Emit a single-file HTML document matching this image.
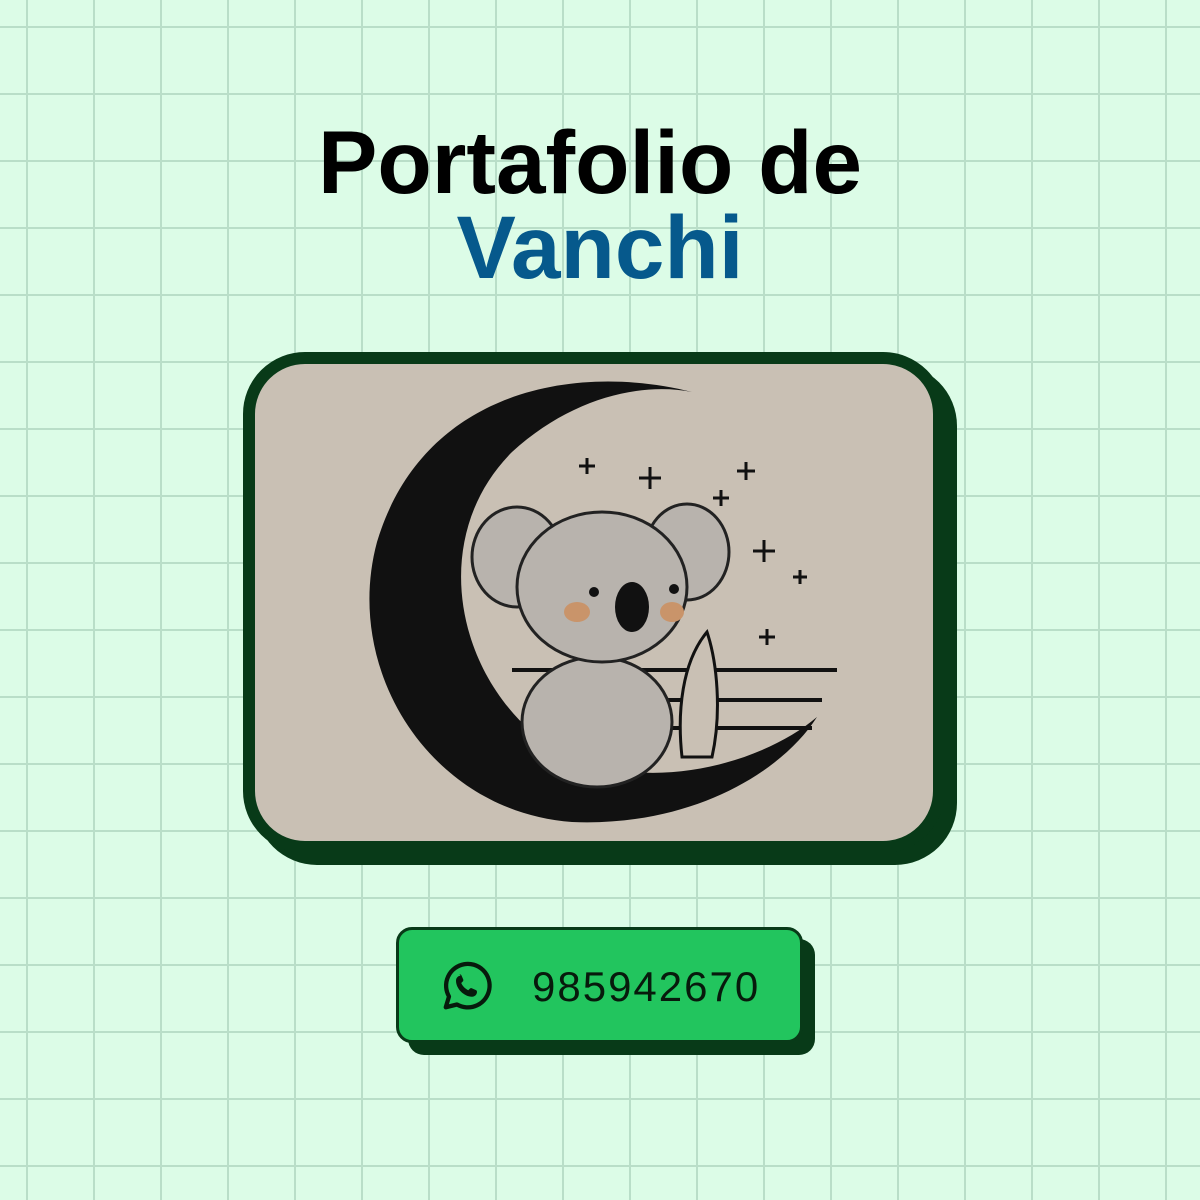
<!DOCTYPE html>
<html><head><meta charset="utf-8"><style>
html,body{margin:0;padding:0}
body{width:1200px;height:1200px;position:relative;overflow:hidden;background-color:#dcfce7;
background-image:linear-gradient(to right,#b9dec8 2px,transparent 2px),linear-gradient(to bottom,#b9dec8 2px,transparent 2px);
background-size:67px 67px;background-position:26px 26px;font-family:"Liberation Sans",sans-serif}
.t{position:absolute;left:0;width:1200px;text-align:center;font-weight:bold;font-size:89px;letter-spacing:0}
.card{position:absolute;left:243px;top:352px;width:678px;height:477px;border:12px solid #083a18;border-radius:62px;background:#c9c0b4;box-shadow:12px 12px 0 #083a18;overflow:hidden}
.btn{position:absolute;left:396px;top:927px;width:401px;height:110px;background:#22c55e;border:3px solid #083a18;border-radius:16px;box-shadow:12px 12px 0 #083a18}
.num{position:absolute;left:133px;top:33px;font-size:42px;color:#071a0c;letter-spacing:2px}
</style></head><body>
<div class="t" style="top:111px;left:-10px;color:#000">Portafolio de</div>
<div class="t" style="top:196px;color:#06598c">Vanchi</div>
<div class="card">
<svg width="678" height="477" viewBox="243 352 678 477" style="position:absolute;left:0;top:0">
<path d="M680 380 C560 350 410 380 365 530 C330 660 420 800 560 810 C680 815 770 760 805 705 C740 760 600 790 520 720 C440 650 420 520 500 440 C560 385 630 370 680 380Z" fill="#111"/>
<g stroke="#111" stroke-width="4" fill="none">
<path d="M500 658 H825 M560 688 H810 M610 716 H800"/>
</g>
<g fill="#b8b3ad" stroke="#222" stroke-width="3">
<ellipse cx="505" cy="545" rx="45" ry="50"/>
<ellipse cx="675" cy="540" rx="42" ry="48"/>
<ellipse cx="585" cy="710" rx="75" ry="65"/>
<ellipse cx="590" cy="575" rx="85" ry="75"/>
</g>
<ellipse cx="620" cy="595" rx="17" ry="25" fill="#111"/>
<circle cx="582" cy="580" r="5" fill="#111"/><circle cx="662" cy="577" r="5" fill="#111"/>
<ellipse cx="565" cy="600" rx="13" ry="10" fill="#c9946a"/><ellipse cx="660" cy="600" rx="12" ry="10" fill="#c9946a"/>
<path d="M695 620 C670 650 665 700 670 745 L700 745 C710 700 705 650 695 620Z" fill="#c9c0b4" stroke="#111" stroke-width="3"/>
<g stroke="#111" stroke-width="3">
<path d="M575 446v16M567 454h16M638 455v22M627 466h22M734 450v18M725 459h18M709 478v16M701 486h16M752 528v22M741 539h22M788 558v14M781 565h14M755 617v16M747 625h16"/>
</g>
</svg>
</div>
<div class="btn">
<svg width="60" height="60" viewBox="0 0 24 24" style="position:absolute;left:38px;top:26px">
<path d="M3.5 20.5l1.3-4.3A8.7 8.7 0 1 1 8 19.4z" fill="none" stroke="#071a0c" stroke-width="1.7" stroke-linejoin="round"/>
<path d="M9 7.3c.4 0 .7.2.8.5l.7 1.6c.1.3 0 .6-.2.8l-.6.6c.5 1.2 1.6 2.3 2.8 2.9l.6-.6c.2-.2.5-.3.8-.2l1.6.7c.3.1.5.4.5.8 0 1-.9 1.9-2 1.9-3.100 0-6.4-3.200-6.4-6.400 0-1.100.8-2 1.800-2z" fill="#071a0c"/>
</svg>
<div class="num">985942670</div>
</div>
</body></html>
